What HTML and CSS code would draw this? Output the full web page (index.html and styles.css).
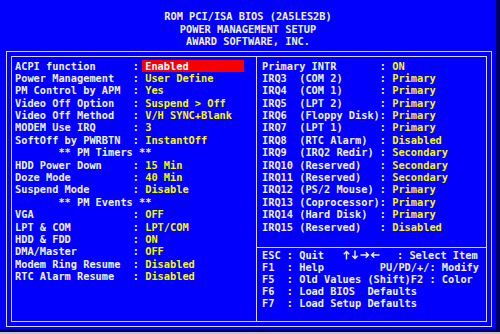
FILE: index.html
```html
<!DOCTYPE html>
<html lang="en">
<head>
  <meta charset="UTF-8" />
  <title>Power Management Setup</title>
  <link rel="stylesheet" href="styles.css">
</head>
<body>
<div class="screen">
  <div class="title">
    <div>ROM PCI/ISA BIOS (2A5LES2B)</div>
    <div>POWER MANAGEMENT SETUP</div>
    <div>AWARD SOFTWARE, INC.</div>
  </div>
  <div class="frame">
    <div class="inner">
      <div class="panel left">
        <div class="row"><span class="lbl">ACPI function</span>: <span class="val sel">Enabled</span></div>
        <div class="row"><span class="lbl">Power Management</span>: <span class="val">User Define</span></div>
        <div class="row"><span class="lbl">PM Control by APM</span>: <span class="val">Yes</span></div>
        <div class="row"><span class="lbl">Video Off Option</span>: <span class="val">Suspend &gt; Off</span></div>
        <div class="row"><span class="lbl">Video Off Method</span>: <span class="val">V/H SYNC+Blank</span></div>
        <div class="row"><span class="lbl">MODEM Use IRQ</span>: <span class="val">3</span></div>
        <div class="row"><span class="lbl">SoftOff by PWRBTN</span>: <span class="val">InstantOff</span></div>
        <div class="row head">** PM Timers **</div>
        <div class="row"><span class="lbl">HDD Power Down</span>: <span class="val">15 Min</span></div>
        <div class="row"><span class="lbl">Doze Mode</span>: <span class="val">40 Min</span></div>
        <div class="row"><span class="lbl">Suspend Mode</span>: <span class="val">Disable</span></div>
        <div class="row head">** PM Events **</div>
        <div class="row"><span class="lbl">VGA</span>: <span class="val">OFF</span></div>
        <div class="row"><span class="lbl">LPT &amp; COM</span>: <span class="val">LPT/COM</span></div>
        <div class="row"><span class="lbl">HDD &amp; FDD</span>: <span class="val">ON</span></div>
        <div class="row"><span class="lbl">DMA/Master</span>: <span class="val">OFF</span></div>
        <div class="row"><span class="lbl">Modem Ring Resume</span>: <span class="val">Disabled</span></div>
        <div class="row"><span class="lbl">RTC Alarm Resume</span>: <span class="val">Disabled</span></div>
      </div>
      <div class="panel right">
        <div class="irqs">
          <div class="row"><span class="lbl">Primary INTR</span>: <span class="val">ON</span></div>
          <div class="row"><span class="lbl">IRQ3  (COM 2)</span>: <span class="val">Primary</span></div>
          <div class="row"><span class="lbl">IRQ4  (COM 1)</span>: <span class="val">Primary</span></div>
          <div class="row"><span class="lbl">IRQ5  (LPT 2)</span>: <span class="val">Primary</span></div>
          <div class="row"><span class="lbl">IRQ6  (Floppy Disk)</span>: <span class="val">Primary</span></div>
          <div class="row"><span class="lbl">IRQ7  (LPT 1)</span>: <span class="val">Primary</span></div>
          <div class="row"><span class="lbl">IRQ8  (RTC Alarm)</span>: <span class="val">Disabled</span></div>
          <div class="row"><span class="lbl">IRQ9  (IRQ2 Redir)</span>: <span class="val">Secondary</span></div>
          <div class="row"><span class="lbl">IRQ10 (Reserved)</span>: <span class="val">Secondary</span></div>
          <div class="row"><span class="lbl">IRQ11 (Reserved)</span>: <span class="val">Secondary</span></div>
          <div class="row"><span class="lbl">IRQ12 (PS/2 Mouse)</span>: <span class="val">Primary</span></div>
          <div class="row"><span class="lbl">IRQ13 (Coprocessor)</span>: <span class="val">Primary</span></div>
          <div class="row"><span class="lbl">IRQ14 (Hard Disk)</span>: <span class="val">Primary</span></div>
          <div class="row"><span class="lbl">IRQ15 (Reserved)</span>: <span class="val">Disabled</span></div>
        </div>
        <div class="help">
          <div class="row">ESC : Quit   <svg class="arrows" width="37" height="10" viewBox="0 0 37 10"><g fill="none" stroke="#f0f0f0" stroke-width="1.4"><path d="M3.5 9.5V1.5M0.8 4.3L3.5 1.5L6.2 4.3"/><path d="M12 0.5V8.5M9.3 5.7L12 8.5L14.7 5.7"/><path d="M17.5 5H25.5M22.7 2.3L25.5 5L22.7 7.7"/><path d="M28.5 5H36.5M31.3 2.3L28.5 5L31.3 7.7"/></g></svg>  : Select Item</div>
          <div class="row">F1  : Help         PU/PD/+/: Modify</div>
          <div class="row">F5  : Old Values (Shift)F2 : Color</div>
          <div class="row">F6  : Load BIOS  Defaults</div>
          <div class="row">F7  : Load Setup Defaults</div>
        </div>
      </div>
    </div>
  </div>
</div>
</body>
</html>
```

FILE: styles.css
```css
body {
  margin: 0;
  background-color: #c4c4cc;
  font-family: "DejaVu Sans Mono", "Liberation Mono", monospace;
  font-weight: bold;
  font-size: 10.3px;
  color: #f0f0f0;
}

.screen {
  width: 496px;
  height: 329px;
  background-color: #0000fc;
  border-right: 4px solid #00005c;
  border-bottom: 3px solid #00005c;
}

.title {
  padding-top: 10px;
  text-align: center;
  line-height: 12.5px;
}

.frame {
  margin: 3.5px 0 0 6px;
  width: 486px;
  height: 276px;
  box-sizing: border-box;
  border: 1px solid #d8d8ff;
  padding: 4px;
}

.inner {
  height: 100%;
  box-sizing: border-box;
  border: 1px solid #d8d8ff;
  display: flex;
}

.panel {
  box-sizing: border-box;
}

.left {
  width: 245px;
  border-right: 1px solid #d8d8ff;
  padding: 2.5px 0 0 3px;
}

.right {
  flex: 1;
  display: flex;
  flex-direction: column;
}

.irqs {
  height: 191px;
  box-sizing: border-box;
  border-bottom: 1px solid #d8d8ff;
  padding: 2.5px 0 0 5px;
}

.help {
  padding: 0.5px 0 0 5px;
}

.row {
  line-height: 12.1px;
  height: 12.4px;
  white-space: pre;
}

.irqs .row,
.left .row {
  line-height: 12.4px;
}

.help .row {
  height: 12.1px;
}

.lbl {
  display: inline-block;
  width: 19ch;
}

.val {
  color: #f8f800;
}

.sel {
  display: inline-block;
  vertical-align: top;
  width: 16ch;
  margin-left: -0.5ch;
  padding-left: 0.5ch;
  background-color: #f80000;
  color: #ffffff;
}

.head {
  padding-left: 7ch;
}

.arrows {
  vertical-align: -1px;
  margin-right: 5px;
}
```
